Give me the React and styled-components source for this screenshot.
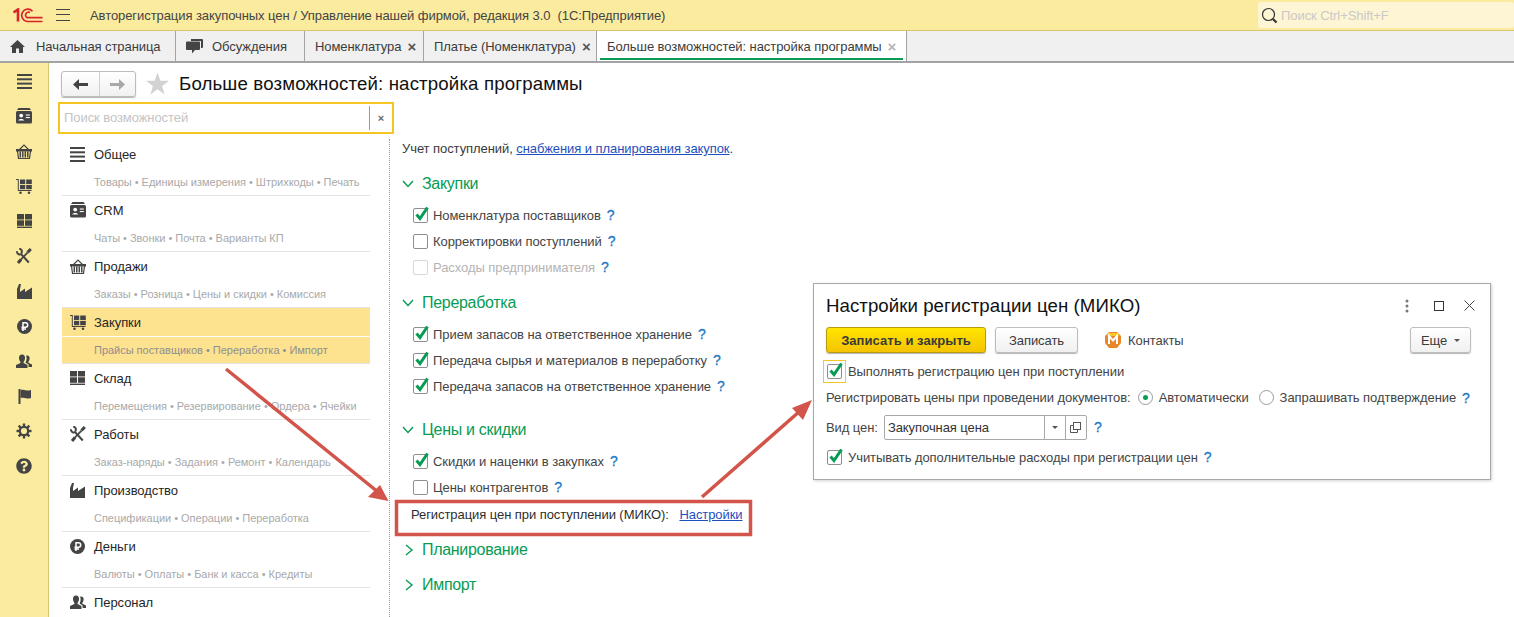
import React from "react";
import styled, { createGlobalStyle } from "styled-components";
import { FaQuestionCircle } from "react-icons/fa";

const Global = createGlobalStyle`
  html, body {
    margin: 0;
    height: 617px;
    overflow: hidden;
    background: #fff;
    font-family: "Liberation Sans", Arial, sans-serif;
    font-size: 13px;
    letter-spacing: -0.07px;
    color: #333;
  }
  * { box-sizing: border-box; }
`;

const Page = styled.div`
  position: relative;
  width: 1514px;
  height: 617px;
  overflow: hidden;
  display: flex;
  flex-direction: column;
`;

const TopBar = styled.div`
  height: 31px;
  flex: none;
  background: #fbeb9e;
  border-bottom: 1px solid #d6c56c;
  display: flex;
  align-items: center;
  padding-left: 13px;
`;
const Burger = styled.div`
  margin-left: 13px;
  width: 14px;
  height: 12px;
  border-top: 1px solid #444;
  border-bottom: 1px solid #444;
  position: relative;
  &::after {
    content: "";
    position: absolute;
    left: 0;
    right: 0;
    top: 4px;
    border-top: 1px solid #444;
  }
`;
const AppTitle = styled.div`
  margin-left: 20px;
  color: #444;
  white-space: pre;
`;
const GlobalSearch = styled.div`
  margin-left: auto;
  width: 256px;
  height: 26px;
  background: #fdf5d3;
  border-radius: 2px;
  display: flex;
  align-items: center;
  padding-left: 3px;
  gap: 3px;
  color: #c9c9c9;
`;

const TabBar = styled.div`
  height: 32px;
  flex: none;
  background: #f0f0f0;
  border-bottom: 2px solid #a3a3a3;
  display: flex;
`;
const Tab = styled.div`
  width: ${(p) => p.$w}px;
  flex: none;
  border-right: 1px solid #a3a3a3;
  display: flex;
  align-items: center;
  padding-left: ${(p) => p.$pad}px;
  position: relative;
  color: #3c3c3c;
  white-space: nowrap;
  background: ${(p) => (p.$active ? "#fff" : "transparent")};
  ${(p) =>
    p.$active &&
    `&::after {
      content: "";
      position: absolute;
      left: 3px;
      right: 3px;
      bottom: 1px;
      height: 2px;
      background: #079b54;
    }`}
`;
const TabIcon = styled.span`
  display: flex;
  width: ${(p) => p.$w}px;
  flex: none;
`;
const TabClose = styled.span`
  margin-left: 6px;
  font-size: 15px;
  line-height: 13px;
  font-weight: bold;
  color: ${(p) => (p.$dim ? "#b5b5b5" : "#555")};
`;

const Main = styled.div`
  flex: 1;
  display: flex;
  min-height: 0;
`;
const Sidebar = styled.div`
  width: 49px;
  flex: none;
  background: #fbeb9e;
  border-right: 1px solid #d6c56c;
  display: flex;
  flex-direction: column;
  align-items: center;
  padding: 8px 0 0;
  gap: 15px;
  color: #444;
`;
const SideIcon = styled.div`
  width: 20px;
  height: 20px;
  display: flex;
  align-items: center;
  justify-content: center;
`;

const Content = styled.div`
  flex: 1;
  display: flex;
  flex-direction: column;
  min-width: 0;
`;
const Header = styled.div`
  height: 39px;
  flex: none;
  padding: 8px 0 0 12px;
  display: flex;
  align-items: flex-start;
`;
const NavGroup = styled.div`
  width: 75px;
  height: 26px;
  border: 1px solid #bcbcbc;
  border-radius: 3px;
  background: linear-gradient(#fff, #f1f1f1);
  box-shadow: 0 1px 1px #b5b5b5;
  display: grid;
  grid-template-columns: 37px 1fr;
`;
const NavBtn = styled.div`
  display: flex;
  align-items: center;
  justify-content: center;
  & + & {
    border-left: 1px solid #d0d0d0;
  }
`;
const Star = styled.div`
  margin-left: 10px;
  margin-top: 1px;
  display: flex;
`;
const PageTitle = styled.h1`
  margin: 0 0 0 10px;
  font-size: 18.67px;
  line-height: 26px;
  font-weight: normal;
  color: #111;
  letter-spacing: 0.14px;
`;
const SearchBox = styled.div`
  margin-left: 9px;
  width: 336px;
  height: 32px;
  flex: none;
  border: 2px solid #f5c623;
  display: flex;
  align-items: center;
  padding-left: 4px;
  color: #c4c4c4;
`;
const SearchText = styled.div`
  flex: 1;
  height: 24px;
  line-height: 24px;
  border-right: 1px solid #9a9a9a;
`;
const SearchClear = styled.div`
  width: 22px;
  text-align: center;
  font-size: 11px;
  font-weight: bold;
  color: #666;
`;

const Body = styled.div`
  flex: 1;
  display: flex;
  min-height: 0;
  padding-top: 5px;
`;
const Menu = styled.div`
  margin-left: 13px;
  width: 308px;
  flex: none;
`;
const MenuItem = styled.div`
  border-top: 1px solid ${(p) => (p.$first ? "transparent" : "#e4e4e4")};
`;
const MenuTitle = styled.div`
  height: 28px;
  margin-bottom: 1px;
  display: flex;
  align-items: center;
  color: #262626;
  background: ${(p) => (p.$active ? "#fde28f" : "transparent")};
`;
const MenuIcon = styled.div`
  width: 32px;
  padding-left: 8px;
  flex: none;
  display: flex;
  color: #444;
`;
const MenuSub = styled.div`
  height: 26px;
  line-height: 26px;
  padding-left: 32px;
  font-size: 11px;
  letter-spacing: -0.02px;
  color: ${(p) => (p.$active ? "#8f8f8f" : "#a9a9a9")};
  background: ${(p) => (p.$active ? "#fde28f" : "transparent")};
  white-space: nowrap;
`;
const Settings = styled.div`
  margin-left: 19px;
  padding: 2px 0 0 12px;
  border-left: 1px dotted #999;
  flex: 1;
`;
const Intro = styled.div`
  height: 16px;
  line-height: 16px;
  color: #3a3a3a;
`;
const Link = styled.a`
  color: #1e4fbd;
  text-decoration: underline;
`;
const Group = styled.div`
  margin-top: ${(p) => p.$top}px;
  height: 24px;
  display: flex;
  align-items: center;
  font-size: 16px;
  letter-spacing: -0.3px;
  color: #079b54;
  margin-bottom: ${(p) => p.$bottom || 0}px;
`;
const Chevron = styled.span`
  width: 20px;
  flex: none;
  display: flex;
`;
const Row = styled.div`
  height: 26px;
  padding-left: 11px;
  display: flex;
  align-items: center;
  color: ${(p) => (p.$off ? "#b4b4b4" : "#444")};
  white-space: nowrap;
`;
const Box = styled.span`
  width: 15px;
  height: 15px;
  flex: none;
  position: relative;
  border: 1px solid ${(p) => (p.$off ? "#d8d8d8" : "#8e8e8e")};
  border-radius: 2px;
  background: #fff;
  margin-right: 5px;
  svg {
    position: absolute;
    left: 0;
    top: -4px;
  }
`;
const Help = styled.span`
  margin-left: ${(p) => p.$gap || 6}px;
  color: #1b78c4;
  font-size: 14px;
  -webkit-text-stroke: 0.3px #1b78c4;
`;
const PluginRow = styled.div`
  height: 26px;
  margin-top: 1px;
  margin-bottom: 11px;
  padding-left: 9px;
  display: flex;
  align-items: center;
  color: #2e2e2e;
  white-space: pre;
`;
const PluginLink = styled(Link)`
  margin-left: 7px;
`;

const Dialog = styled.div`
  position: absolute;
  left: 813px;
  top: 283px;
  width: 678px;
  height: 197px;
  background: #fff;
  border: 1px solid #a8a8a8;
  box-shadow: 1px 1px 3px rgba(0, 0, 0, 0.18);
  padding: 0 19px 0 12px;
  display: flex;
  flex-direction: column;
`;
const DialogHead = styled.div`
  height: 43px;
  display: flex;
  align-items: center;
`;
const DialogTitle = styled.div`
  font-size: 18.67px;
  letter-spacing: 0.05px;
  color: #111;
`;
const WinButtons = styled.div`
  margin-left: auto;
  margin-right: -4px;
  display: flex;
  align-items: center;
  gap: 25px;
  svg:last-child {
    margin-left: -5px;
  }
`;
const Toolbar = styled.div`
  height: 26px;
  display: flex;
  align-items: center;
`;
const Button = styled.div`
  height: 26px;
  width: ${(p) => p.$w}px;
  margin-left: ${(p) => p.$left || 0}px;
  display: flex;
  align-items: center;
  justify-content: center;
  gap: 7px;
  border-radius: 3px;
  border: 1px solid ${(p) => (p.$primary ? "#b89c10" : "#bdbdbd")};
  background: ${(p) =>
    p.$primary ? "linear-gradient(#ffe500, #f5c400)" : "linear-gradient(#fff, #f0f0f0)"};
  box-shadow: 0 1px 1px #b5b5b5;
  color: #3a3a3a;
  font-weight: ${(p) => (p.$primary ? "bold" : "normal")};
  letter-spacing: ${(p) => (p.$primary ? "0.05px" : "-0.07px")};
`;
const Contacts = styled.div`
  margin-left: 27px;
  display: flex;
  align-items: center;
  gap: 7px;
  color: #444;
`;
const MoreCaret = styled.span`
  width: 0;
  height: 0;
  border-left: 3px solid transparent;
  border-right: 3px solid transparent;
  border-top: 3px solid #555;
`;
const More = styled(Button)`
  margin-left: auto;
`;
const FormRow = styled.div`
  height: ${(p) => p.$h}px;
  margin-top: ${(p) => p.$top || 0}px;
  display: flex;
  align-items: center;
  color: #444;
  white-space: nowrap;
`;
const CheckWrap = styled.span`
  display: flex;
  align-items: center;
  justify-content: center;
  width: 23px;
  height: 23px;
  margin-left: -3px;
  margin-right: 2px;
  border: ${(p) => (p.$focus ? "1px solid #f5c623" : "1px solid transparent")};
  ${Box} {
    margin-right: 0;
  }
`;
const Radio = styled.span`
  width: 15px;
  height: 15px;
  flex: none;
  border: 1px solid #9a9a9a;
  border-radius: 50%;
  margin: ${(p) => p.$margin};
  display: flex;
  align-items: center;
  justify-content: center;
  &::after {
    content: "";
    width: 5px;
    height: 5px;
    border-radius: 50%;
    background: ${(p) => (p.$on ? "#079b54" : "transparent")};
  }
`;
const Field = styled.div`
  margin-left: 6px;
  width: 203px;
  height: 25px;
  border: 1px solid #a8a8a8;
  border-radius: 2px;
  display: flex;
  align-items: center;
  padding-left: 3px;
  color: #333;
`;
const FieldValue = styled.div`
  flex: 1;
`;
const FieldBtn = styled.div`
  width: 21px;
  height: 100%;
  border-left: 1px solid #a8a8a8;
  display: flex;
  align-items: center;
  justify-content: center;
`;

const Annotations = styled.svg`
  position: absolute;
  left: 0;
  top: 0;
  pointer-events: none;
`;

const Logo = () => (
  <svg width="30" height="15" viewBox="0 0 30 15" fill="none" stroke="#d8232a">
    <path d="M0.5 4.5 L5 1.5 V13.5" strokeWidth="2.6" />
    <path d="M19.5 3.2 A6.2 6.2 0 1 0 14 13.5 H29.5" strokeWidth="1.7" />
    <path d="M17 4.6 A2.9 2.9 0 1 0 14 9.7 H29.5" strokeWidth="1.7" />
  </svg>
);

const Magnifier = () => (
  <svg width="17" height="17" viewBox="0 0 17 17" fill="none" stroke="#333">
    <circle cx="7.5" cy="7.5" r="6" strokeWidth="1.2" />
    <path d="M12 12 L15.5 15.5" strokeWidth="2.2" />
  </svg>
);

const HomeIcon = () => (
  <svg width="15" height="13" viewBox="0 0 15 13" fill="#444">
    <path d="M7.5 0 L15 7 H13 V13 H9 V8.5 H6 V13 H2 V7 H0 Z" />
  </svg>
);

const ChatIcon = () => (
  <svg width="17" height="15" viewBox="0 0 17 15" fill="#444">
    <path d="M5 0 H16 a1 1 0 0 1 1 1 V8 a1 1 0 0 1 -1 1 H15 V2 H5 Z" />
    <path d="M1 2.5 H13 a1 1 0 0 1 1 1 V10 a1 1 0 0 1 -1 1 H9 L6 14.5 V11 H1 a1 1 0 0 1 -1 -1 V3.5 a1 1 0 0 1 1 -1 Z" />
  </svg>
);

const ArrowLeft = ({ color }) => (
  <svg width="15" height="11" viewBox="0 0 15 11" fill={color}>
    <path d="M0 5.5 L6 0 V4 H15 V7 H6 V11 Z" />
  </svg>
);
const ArrowRight = ({ color }) => (
  <svg width="15" height="11" viewBox="0 0 15 11" fill={color}>
    <path d="M15 5.5 L9 0 V4 H0 V7 H9 V11 Z" />
  </svg>
);
const StarIcon = () => (
  <svg width="23" height="23" viewBox="0 0 24 23" fill="#d2d2d2">
    <path d="M12 0 L15 8.5 H24 L16.8 14 L19.4 23 L12 17.6 L4.6 23 L7.2 14 L0 8.5 H9 Z" />
  </svg>
);

const MenuLines = () => (
  <svg width="15" height="15" viewBox="0 0 15 15" fill="currentColor">
    <rect y="0" width="15" height="2" />
    <rect y="4.3" width="15" height="2" />
    <rect y="8.6" width="15" height="2" />
    <rect y="13" width="15" height="2" />
  </svg>
);
const CrmIcon = () => (
  <svg width="16" height="16" viewBox="0 0 16 16" fill="currentColor">
    <path d="M2.5 0 H13.5 L15 2 H1 Z" />
    <path d="M1.5 3 H14.5 a1.5 1.5 0 0 1 1.5 1.5 V14 a1.5 1.5 0 0 1 -1.5 1.5 H1.5 A1.5 1.5 0 0 1 0 14 V4.5 A1.5 1.5 0 0 1 1.5 3 Z" />
    <g fill="#fff">
      <circle cx="5.2" cy="7.6" r="1.9" />
      <path d="M2.2 12.6 C2.4 10.4 8 10.4 8.2 12.6 Z" />
      <rect x="9.8" y="6.5" width="4" height="1.1" />
      <rect x="9.8" y="9" width="4" height="1.1" />
    </g>
  </svg>
);
const BasketIcon = () => (
  <svg width="16" height="15" viewBox="0 0 16 15" fill="none" stroke="currentColor">
    <path d="M3 6 L8 1 L13 6" strokeWidth="1.2" />
    <path d="M0 5.5 H16 V7 H0 Z" fill="currentColor" />
    <path d="M1.5 7 L2.5 14.5 H13.5 L14.5 7" strokeWidth="1.2" />
    <path d="M4.3 7.5 V13.5 M6.8 7.5 V13.5 M9.3 7.5 V13.5 M11.8 7.5 V13.5" strokeWidth="1.5" />
  </svg>
);
const CartIcon = () => (
  <svg width="16" height="15" viewBox="0 0 16 15" fill="currentColor">
    <path d="M0 0 H2.8 V11 H15.5 V12 H1.8 V1 H0 Z" />
    <rect x="4" y="0.5" width="5.2" height="4.6" />
    <rect x="10.2" y="0.5" width="5.6" height="4.6" />
    <rect x="4" y="6" width="5.2" height="4.2" />
    <rect x="10.2" y="6" width="5.6" height="4.2" />
    <circle cx="4.5" cy="13.7" r="1.3" />
    <circle cx="13" cy="13.7" r="1.3" />
  </svg>
);
const StockIcon = () => (
  <svg width="15" height="14" viewBox="0 0 15 14" fill="currentColor">
    <rect width="7" height="5.5" />
    <rect x="8" width="7" height="5.5" />
    <rect y="6.3" width="7" height="5.5" />
    <rect x="8" y="6.3" width="7" height="5.5" />
    <rect y="12.6" width="15" height="1.4" />
  </svg>
);
const ToolsIcon = () => (
  <svg width="16" height="16" viewBox="0 0 16 16" fill="none" stroke="currentColor">
    <path d="M0.9 3.2 C0.9 6 3.5 7 5 6 L12.8 14.5" strokeWidth="2" />
    <path d="M3.2 0.8 C5.5 0.8 6.5 3 5.4 5.2" strokeWidth="2" />
    <path d="M14.8 1 L11.5 4.6" strokeWidth="3" />
    <path d="M11.5 4.6 L3.5 13" strokeWidth="1.8" />
    <path d="M5 11.5 L2 15" strokeWidth="3" />
  </svg>
);
const FactoryIcon = () => (
  <svg width="15" height="15" viewBox="0 0 15 15" fill="currentColor">
    <path d="M0 15 V5 L2 0 H4 L3 5 V8 L8 4.5 V8 L15 3.5 V15 Z" />
  </svg>
);
const RubleIcon = () => (
  <svg width="15" height="15" viewBox="0 0 15 15">
    <circle cx="7.5" cy="7.5" r="7.5" fill="currentColor" />
    <path d="M6 12 V3.8 H8.5 a2 2 0 0 1 0 4.4 H4.5 M4.5 10 H9" fill="none" stroke="#fff" strokeWidth="1.5" />
  </svg>
);
const PeopleIcon = () => (
  <svg width="16" height="14" viewBox="0 0 16 14" fill="currentColor">
    <path d="M6 0.5 C8.3 0.5 9.3 2.3 9 4.5 C8.8 6 8.2 7.2 7.6 7.8 V9 L11.5 11 V14 H0 V11 L4.4 9 V7.8 C3.8 7.2 3.2 6 3 4.5 C2.7 2.3 3.7 0.5 6 0.5 Z" />
    <path d="M11 1.5 C13 1.5 13.9 3 13.6 5 C13.4 6.2 13 7.2 12.4 7.8 V8.8 L16 10.6 V13 H12.6 V10.4 L9.5 8.6 C10.3 7.4 10.6 6 10.6 4.3 C10.6 3.4 10.5 2.4 10 1.7 Z" />
  </svg>
);
const FlagIcon = () => (
  <svg width="13" height="15" viewBox="0 0 13 15" fill="currentColor">
    <rect x="0.5" width="2" height="15" />
    <path d="M2.5 1 C5 0 7 2.5 13 1 V9 C8 10.5 5 8 2.5 9 Z" />
  </svg>
);
const GearIcon = () => (
  <svg width="16" height="16" viewBox="0 0 16 16" fill="none" stroke="currentColor">
    <circle cx="8" cy="8" r="4.2" strokeWidth="2.2" />
    {[0, 45, 90, 135, 180, 225, 270, 315].map((deg) => (
      <path key={deg} d="M8 0.5 V3.5" strokeWidth="2.4" transform={`rotate(${deg} 8 8)`} />
    ))}
  </svg>
);

const icons = {
  menu: <MenuLines />,
  crm: <CrmIcon />,
  basket: <BasketIcon />,
  cart: <CartIcon />,
  stock: <StockIcon />,
  tools: <ToolsIcon />,
  factory: <FactoryIcon />,
  ruble: <RubleIcon />,
  people: <PeopleIcon />,
  flag: <FlagIcon />,
  gear: <GearIcon />,
  help: <FaQuestionCircle size={16} />,
};

const sideIcons = ["menu", "crm", "basket", "cart", "stock", "tools", "factory", "ruble", "people", "flag", "gear", "help"];

const menuItems = [
  { icon: "menu", title: "Общее", sub: "Товары • Единицы измерения • Штрихкоды • Печать" },
  { icon: "crm", title: "CRM", sub: "Чаты • Звонки • Почта • Варианты КП" },
  { icon: "basket", title: "Продажи", sub: "Заказы • Розница • Цены и скидки • Комиссия" },
  { icon: "cart", title: "Закупки", sub: "Прайсы поставщиков • Переработка • Импорт", active: true },
  { icon: "stock", title: "Склад", sub: "Перемещения • Резервирование • Ордера • Ячейки" },
  { icon: "tools", title: "Работы", sub: "Заказ-наряды • Задания • Ремонт • Календарь" },
  { icon: "factory", title: "Производство", sub: "Спецификации • Операции • Переработка" },
  { icon: "ruble", title: "Деньги", sub: "Валюты • Оплаты • Банк и касса • Кредиты" },
  { icon: "people", title: "Персонал", sub: "" },
];

const Tick = () => (
  <svg width="17" height="17" viewBox="0 0 17 17" fill="none" stroke="#079b54" strokeWidth="3">
    <path d="M2.5 9.5 L6 13.5 L13.5 2.5" />
  </svg>
);

const ChevronDown = () => (
  <svg width="12" height="8" viewBox="0 0 12 8" fill="none" stroke="#079b54" strokeWidth="1.4">
    <path d="M1 1 L6 6.5 L11 1" />
  </svg>
);
const ChevronRight = () => (
  <svg width="9" height="12" viewBox="0 0 9 12" fill="none" stroke="#079b54" strokeWidth="1.4" style={{ marginLeft: 3 }}>
    <path d="M1 1 L7 6 L1 11" />
  </svg>
);

const Check = ({ on, off, label, gap }) => (
  <Row $off={off}>
    <Box $off={off}>{on && <Tick />}</Box>
    {label}
    <Help $gap={gap}>?</Help>
  </Row>
);

const MikoIcon = () => (
  <svg width="16" height="16" viewBox="0 0 16 16">
    <path d="M4 0 H12 L16 4 V11 L12 16 H4 L0 11 V4 Z" fill="#e8862a" />
    <path d="M3 1 H13 L14 4 H2 Z" fill="#f8c82a" />
    <path d="M4 12 V4 L8 8.5 L12 4 V12" fill="none" stroke="#fff" strokeWidth="2" />
  </svg>
);

export default function App() {
  return (
    <Page>
      <Global />
      <TopBar>
        <Logo />
        <Burger />
        <AppTitle>Авторегистрация закупочных цен / Управление нашей фирмой, редакция 3.0  (1С:Предприятие)</AppTitle>
        <GlobalSearch>
          <Magnifier />
          Поиск Ctrl+Shift+F
        </GlobalSearch>
      </TopBar>
      <TabBar>
        <Tab $w={176} $pad={10}>
          <TabIcon $w={26}><HomeIcon /></TabIcon>
          Начальная страница
        </Tab>
        <Tab $w={129} $pad={10}>
          <TabIcon $w={26}><ChatIcon /></TabIcon>
          Обсуждения
        </Tab>
        <Tab $w={119} $pad={10}>
          Номенклатура<TabClose>×</TabClose>
        </Tab>
        <Tab $w={173} $pad={10}>
          Платье (Номенклатура)<TabClose>×</TabClose>
        </Tab>
        <Tab $w={310} $pad={10} $active>
          Больше возможностей: настройка программы<TabClose $dim>×</TabClose>
        </Tab>
      </TabBar>
      <Main>
        <Sidebar>
          {sideIcons.map((name) => (
            <SideIcon key={name}>{icons[name]}</SideIcon>
          ))}
        </Sidebar>
        <Content>
          <Header>
            <NavGroup>
              <NavBtn><ArrowLeft color="#444" /></NavBtn>
              <NavBtn><ArrowRight color="#a8a8a8" /></NavBtn>
            </NavGroup>
            <Star><StarIcon /></Star>
            <PageTitle>Больше возможностей: настройка программы</PageTitle>
          </Header>
          <SearchBox>
            <SearchText>Поиск возможностей</SearchText>
            <SearchClear>×</SearchClear>
          </SearchBox>
          <Body>
            <Menu>
              {menuItems.map((item, i) => (
                <MenuItem key={item.title} $first={i === 0}>
                  <MenuTitle $active={item.active}>
                    <MenuIcon>{icons[item.icon]}</MenuIcon>
                    {item.title}
                  </MenuTitle>
                  <MenuSub $active={item.active}>{item.sub}</MenuSub>
                </MenuItem>
              ))}
            </Menu>
            <Settings>
              <Intro>
                Учет поступлений, <Link>снабжения и планирования закупок</Link>.
              </Intro>
              <Group $top={15} $bottom={6}><Chevron><ChevronDown /></Chevron>Закупки</Group>
              <Check on label="Номенклатура поставщиков" />
              <Check label="Корректировки поступлений" />
              <Check off label="Расходы предпринимателя" />
              <Group $top={11} $bottom={6}><Chevron><ChevronDown /></Chevron>Переработка</Group>
              <Check on label="Прием запасов на ответственное хранение" />
              <Check on label="Передача сырья и материалов в переработку" />
              <Check on label="Передача запасов на ответственное хранение" />
              <Group $top={19} $bottom={6}><Chevron><ChevronDown /></Chevron>Цены и скидки</Group>
              <Check on label="Скидки и наценки в закупках" />
              <Check label="Цены контрагентов" />
              <PluginRow>
                Регистрация цен при поступлении (МИКО): <PluginLink>Настройки</PluginLink>
              </PluginRow>
              <Group $top={0}><Chevron><ChevronRight /></Chevron>Планирование</Group>
              <Group $top={11}><Chevron><ChevronRight /></Chevron>Импорт</Group>
            </Settings>
          </Body>
        </Content>
      </Main>

      <Annotations width="1514" height="617" viewBox="0 0 1514 617" fill="none">
        <rect x="396.5" y="501.5" width="354" height="33" stroke="#d2544a" strokeWidth="3.5" />
        <path d="M226 369 L378 492" stroke="#d2544a" strokeWidth="3.5" />
        <path d="M388.5 501 L368 497 L380 485 Z" fill="#d2544a" />
        <path d="M702 497 L800 411" stroke="#d2544a" strokeWidth="3.5" />
        <path d="M812 400 L792 408 L803 420 Z" fill="#d2544a" />
      </Annotations>

      <Dialog>
        <DialogHead>
          <DialogTitle>Настройки регистрации цен (МИКО)</DialogTitle>
          <WinButtons>
            <svg width="4" height="14" viewBox="0 0 4 14" fill="#777">
              <circle cx="2" cy="2" r="1.5" />
              <circle cx="2" cy="7" r="1.5" />
              <circle cx="2" cy="12" r="1.5" />
            </svg>
            <svg width="10" height="10" viewBox="0 0 10 10" fill="none" stroke="#333">
              <rect x="0.5" y="0.5" width="9" height="9" />
            </svg>
            <svg width="11" height="11" viewBox="0 0 11 11" fill="none" stroke="#444">
              <path d="M0.5 0.5 L10.5 10.5 M10.5 0.5 L0.5 10.5" />
            </svg>
          </WinButtons>
        </DialogHead>
        <Toolbar>
          <Button $primary $w={160}>Записать и закрыть</Button>
          <Button $w={83} $left={9}>Записать</Button>
          <Contacts><MikoIcon />Контакты</Contacts>
          <More $w={61}>Еще<MoreCaret /></More>
        </Toolbar>
        <FormRow $h={29} $top={4}>
          <CheckWrap $focus><Box><Tick /></Box></CheckWrap>
          Выполнять регистрацию цен при поступлении
        </FormRow>
        <FormRow $h={23}>
          Регистрировать цены при проведении документов:
          <Radio $on $margin="0 6px 0 7px" />
          Автоматически
          <Radio $margin="0 6px 0 10px" />
          Запрашивать подтверждение
          <Help>?</Help>
        </FormRow>
        <FormRow $h={36}>
          Вид цен:
          <Field>
            <FieldValue>Закупочная цена</FieldValue>
            <FieldBtn>
              <MoreCaret />
            </FieldBtn>
            <FieldBtn>
              <svg width="11" height="11" viewBox="0 0 11 11" fill="none" stroke="#555">
                <rect x="3.5" y="0.5" width="7" height="7" />
                <path d="M3 3.5 H0.5 V10.5 H7.5 V8" />
              </svg>
            </FieldBtn>
          </Field>
          <Help $gap={7}>?</Help>
        </FormRow>
        <FormRow $h={24}>
          <CheckWrap><Box><Tick /></Box></CheckWrap>
          Учитывать дополнительные расходы при регистрации цен
          <Help>?</Help>
        </FormRow>
      </Dialog>
    </Page>
  );
}
